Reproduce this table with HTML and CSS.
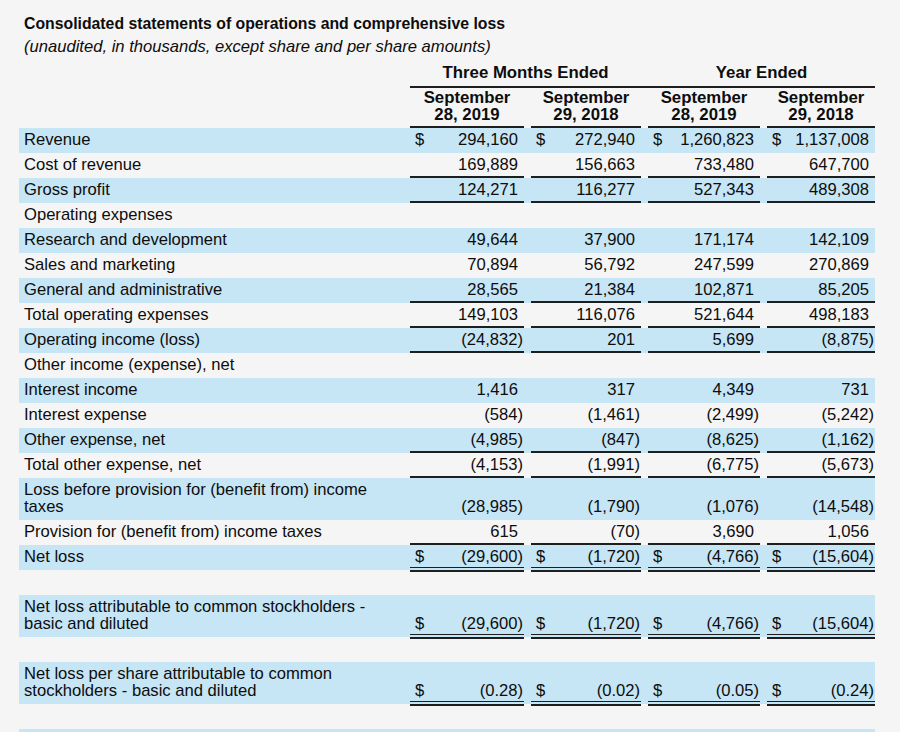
FILE: index.html
```html
<!DOCTYPE html>
<html lang="en">
<head>
<meta charset="utf-8">
<title>Consolidated statements of operations and comprehensive loss</title>
<link rel="stylesheet" href="styles.css">
</head>
<body>
<div class="page">
  <h1 class="title">Consolidated statements of operations and comprehensive loss</h1>
  <p class="subtitle">(unaudited, in thousands, except share and per share amounts)</p>
  <table class="fin">
    <colgroup>
      <col class="c-label">
      <col class="c-d"><col class="c-n1"><col class="c-gap">
      <col class="c-d"><col class="c-n2"><col class="c-gap">
      <col class="c-d"><col class="c-n3"><col class="c-gap">
      <col class="c-d"><col class="c-n4">
    </colgroup>
    <thead>
      <tr class="grp">
        <th></th>
        <th colspan="5" class="u">Three Months Ended</th>
        <th class="u"></th>
        <th colspan="5" class="u">Year Ended</th>
      </tr>
      <tr class="dates">
        <th></th>
        <th colspan="2" class="u">September<br>28, 2019</th><th></th>
        <th colspan="2" class="u">September<br>29, 2018</th><th></th>
        <th colspan="2" class="u">September<br>28, 2019</th><th></th>
        <th colspan="2" class="u">September<br>29, 2018</th>
      </tr>
    </thead>
    <tbody>
      <tr class="b">
        <td class="lbl">Revenue</td>
        <td class="d">$</td><td class="n">294,160</td><td></td>
        <td class="d">$</td><td class="n">272,940</td><td></td>
        <td class="d">$</td><td class="n">1,260,823</td><td></td>
        <td class="d">$</td><td class="n">1,137,008</td>
      </tr>
      <tr class="ul">
        <td class="lbl">Cost of revenue</td>
        <td class="d"></td><td class="n">169,889</td><td></td>
        <td class="d"></td><td class="n">156,663</td><td></td>
        <td class="d"></td><td class="n">733,480</td><td></td>
        <td class="d"></td><td class="n">647,700</td>
      </tr>
      <tr class="b ul">
        <td class="lbl">Gross profit</td>
        <td class="d"></td><td class="n">124,271</td><td></td>
        <td class="d"></td><td class="n">116,277</td><td></td>
        <td class="d"></td><td class="n">527,343</td><td></td>
        <td class="d"></td><td class="n">489,308</td>
      </tr>
      <tr>
        <td class="lbl">Operating expenses</td>
        <td class="d"></td><td class="n"></td><td></td>
        <td class="d"></td><td class="n"></td><td></td>
        <td class="d"></td><td class="n"></td><td></td>
        <td class="d"></td><td class="n"></td>
      </tr>
      <tr class="b">
        <td class="lbl">Research and development</td>
        <td class="d"></td><td class="n">49,644</td><td></td>
        <td class="d"></td><td class="n">37,900</td><td></td>
        <td class="d"></td><td class="n">171,174</td><td></td>
        <td class="d"></td><td class="n">142,109</td>
      </tr>
      <tr>
        <td class="lbl">Sales and marketing</td>
        <td class="d"></td><td class="n">70,894</td><td></td>
        <td class="d"></td><td class="n">56,792</td><td></td>
        <td class="d"></td><td class="n">247,599</td><td></td>
        <td class="d"></td><td class="n">270,869</td>
      </tr>
      <tr class="b ul">
        <td class="lbl">General and administrative</td>
        <td class="d"></td><td class="n">28,565</td><td></td>
        <td class="d"></td><td class="n">21,384</td><td></td>
        <td class="d"></td><td class="n">102,871</td><td></td>
        <td class="d"></td><td class="n">85,205</td>
      </tr>
      <tr class="ul">
        <td class="lbl">Total operating expenses</td>
        <td class="d"></td><td class="n">149,103</td><td></td>
        <td class="d"></td><td class="n">116,076</td><td></td>
        <td class="d"></td><td class="n">521,644</td><td></td>
        <td class="d"></td><td class="n">498,183</td>
      </tr>
      <tr class="b ul">
        <td class="lbl">Operating income (loss)</td>
        <td class="d"></td><td class="n p">(24,832)</td><td></td>
        <td class="d"></td><td class="n">201</td><td></td>
        <td class="d"></td><td class="n">5,699</td><td></td>
        <td class="d"></td><td class="n p">(8,875)</td>
      </tr>
      <tr>
        <td class="lbl">Other income (expense), net</td>
        <td class="d"></td><td class="n"></td><td></td>
        <td class="d"></td><td class="n"></td><td></td>
        <td class="d"></td><td class="n"></td><td></td>
        <td class="d"></td><td class="n"></td>
      </tr>
      <tr class="b">
        <td class="lbl">Interest income</td>
        <td class="d"></td><td class="n">1,416</td><td></td>
        <td class="d"></td><td class="n">317</td><td></td>
        <td class="d"></td><td class="n">4,349</td><td></td>
        <td class="d"></td><td class="n">731</td>
      </tr>
      <tr>
        <td class="lbl">Interest expense</td>
        <td class="d"></td><td class="n p">(584)</td><td></td>
        <td class="d"></td><td class="n p">(1,461)</td><td></td>
        <td class="d"></td><td class="n p">(2,499)</td><td></td>
        <td class="d"></td><td class="n p">(5,242)</td>
      </tr>
      <tr class="b ul">
        <td class="lbl">Other expense, net</td>
        <td class="d"></td><td class="n p">(4,985)</td><td></td>
        <td class="d"></td><td class="n p">(847)</td><td></td>
        <td class="d"></td><td class="n p">(8,625)</td><td></td>
        <td class="d"></td><td class="n p">(1,162)</td>
      </tr>
      <tr class="ul">
        <td class="lbl">Total other expense, net</td>
        <td class="d"></td><td class="n p">(4,153)</td><td></td>
        <td class="d"></td><td class="n p">(1,991)</td><td></td>
        <td class="d"></td><td class="n p">(6,775)</td><td></td>
        <td class="d"></td><td class="n p">(5,673)</td>
      </tr>
      <tr class="b">
        <td class="lbl two">Loss before provision for (benefit from) income<br>taxes</td>
        <td class="d"></td><td class="n p">(28,985)</td><td></td>
        <td class="d"></td><td class="n p">(1,790)</td><td></td>
        <td class="d"></td><td class="n p">(1,076)</td><td></td>
        <td class="d"></td><td class="n p">(14,548)</td>
      </tr>
      <tr class="ul">
        <td class="lbl">Provision for (benefit from) income taxes</td>
        <td class="d"></td><td class="n">615</td><td></td>
        <td class="d"></td><td class="n p">(70)</td><td></td>
        <td class="d"></td><td class="n">3,690</td><td></td>
        <td class="d"></td><td class="n">1,056</td>
      </tr>
      <tr class="b dl">
        <td class="lbl">Net loss</td>
        <td class="d">$</td><td class="n p">(29,600)</td><td></td>
        <td class="d">$</td><td class="n p">(1,720)</td><td></td>
        <td class="d">$</td><td class="n p">(4,766)</td><td></td>
        <td class="d">$</td><td class="n p">(15,604)</td>
      </tr>
      <tr class="sp"><td colspan="12"></td></tr>
      <tr class="b dl">
        <td class="lbl two">Net loss attributable to common stockholders -<br>basic and diluted</td>
        <td class="d">$</td><td class="n p">(29,600)</td><td></td>
        <td class="d">$</td><td class="n p">(1,720)</td><td></td>
        <td class="d">$</td><td class="n p">(4,766)</td><td></td>
        <td class="d">$</td><td class="n p">(15,604)</td>
      </tr>
      <tr class="sp"><td colspan="12"></td></tr>
      <tr class="b dl">
        <td class="lbl two">Net loss per share attributable to common<br>stockholders - basic and diluted</td>
        <td class="d">$</td><td class="n p">(0.28)</td><td></td>
        <td class="d">$</td><td class="n p">(0.02)</td><td></td>
        <td class="d">$</td><td class="n p">(0.05)</td><td></td>
        <td class="d">$</td><td class="n p">(0.24)</td>
      </tr>
      <tr class="sp"><td colspan="12"></td></tr>
      <tr class="b tail"><td colspan="12"></td></tr>
    </tbody>
  </table>
</div>
</body>
</html>
```

FILE: styles.css
```css
html, body {
  margin: 0;
  background: #f5f5f5;
}

body {
  font-family: "Liberation Sans", Arial, Helvetica, sans-serif;
  color: #0d0d0d;
}

.page {
  padding: 14px 0 0 19px;
}

.title {
  margin: 0 0 0 5px;
  font-size: 15.8px;
  line-height: 20px;
  font-weight: bold;
}

.subtitle {
  margin: 3px 0 0 5px;
  font-size: 16.6px;
  line-height: 20px;
  font-style: italic;
}

.fin {
  margin-top: 3px;
  border-collapse: separate;
  border-spacing: 0;
  table-layout: fixed;
  width: 856px;
  font-size: 16.6px;
}

.c-label { width: 391px; }
.c-d { width: 22px; }
.c-gap { width: 7px; }
.c-n1 { width: 92px; }
.c-n2 { width: 88px; }
.c-n3 { width: 90px; }
.c-n4 { width: 86px; }

.fin th {
  font-size: 16.8px;
  font-weight: bold;
  line-height: 17px;
  text-align: center;
  vertical-align: bottom;
  padding: 0;
}

.grp th {
  padding: 4px 0 7px;
}

.dates th {
  padding: 1px 0 5px;
}

.fin th.u {
  box-shadow: inset 0 -2px 0 #1e1e1e;
}

.fin td {
  padding: 0 0 2px;
  line-height: 23px;
  vertical-align: bottom;
  white-space: nowrap;
}

.fin tr.b {
  background: #c6e5f5;
}

.fin td.lbl {
  padding-left: 5px;
}

.fin td.two {
  line-height: 17px;
  padding: 3px 0 5px 5px;
}

.fin td.d {
  padding-left: 5px;
  text-align: left;
}

.fin td.n {
  text-align: right;
  padding-right: 6px;
}

.fin td.n.p {
  padding-right: 1px;
}

.ul td.d,
.ul td.n {
  box-shadow: inset 0 -2px 0 #1e1e1e;
}

.dl td.d,
.dl td.n {
  box-shadow: inset 0 -2px 0 #c6e5f5, inset 0 -3px 0 #1e1e1e, 0 2px 0 #1e1e1e;
}

.sp td {
  height: 25px;
  padding: 0;
  line-height: 0;
}

.tail td {
  height: 42px;
  padding: 0;
  line-height: 0;
}
```
